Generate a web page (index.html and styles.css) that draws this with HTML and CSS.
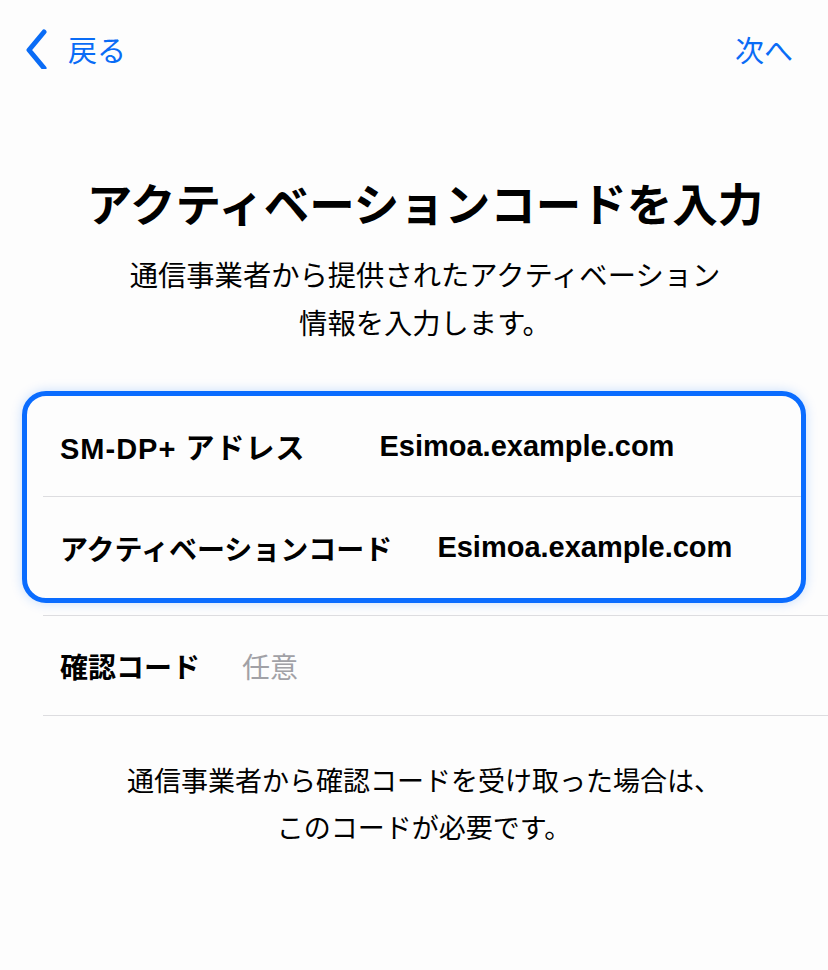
FILE: index.html
```html
<!DOCTYPE html>
<html lang="ja">
<head>
    <meta charset="utf-8" />
    <meta name="viewport" content="width=device-width,initial-scale=1" />
    <title>アクティベーションコードを入力</title>
    <link rel="stylesheet" href="styles.css">
</head>
<body>
    <div class="nav">
        <a class="back">
            <svg class="chev" width="24" height="40" viewBox="0 0 24 40">
                <path d="M19 3 L4 21 L19 39" fill="none" stroke="currentColor" stroke-width="5" stroke-linecap="round" stroke-linejoin="round"/>
            </svg>
            <span>戻る</span>
        </a>
        <a class="next">次へ</a>
    </div>

    <h1 class="title">アクティベーションコードを入力</h1>
    <p class="lead">通信事業者から提供されたアクティベーション<br>情報を入力します。</p>

    <div class="highlight">
        <div class="row row-first">
            <span class="label label-dp">SM-DP+ アドレス</span>
            <span class="value">Esimoa.example.com</span>
        </div>
        <div class="row">
            <span class="label label-code">アクティベーションコード</span>
            <span class="value">Esimoa.example.com</span>
        </div>
    </div>

    <div class="list">
        <div class="row row-plain">
            <span class="label label-check">確認コード</span>
            <span class="placeholder">任意</span>
        </div>
    </div>

    <p class="note">通信事業者から確認コードを受け取った場合は、<br>このコードが必要です。</p>
</body>
</html>
```

FILE: styles.css
```css
* {margin: 0; padding: 0; box-sizing: border-box;}

body {
    background: #fdfdfd;
    color: #000;
    font-family: "Noto Sans CJK JP", "Liberation Sans", sans-serif;
}

.nav {
    display: flex;
    justify-content: space-between;
    align-items: center;
    height: 40px;
    margin-top: 29px;
    padding: 0 35px 0 25px;
    color: #0a6cf6;
    font-size: 29px;
}
.back {
    display: flex;
    align-items: center;
    gap: 19px;
}
.chev {display: block;}

.title {
    margin-top: 106px;
    padding-left: 22px;
    text-align: center;
    font-size: 45.5px;
    line-height: 54px;
    font-weight: 700;
}

.lead {
    margin-top: 21px;
    padding-left: 22px;
    text-align: center;
    font-size: 28.3px;
    line-height: 48px;
}

.highlight {
    margin: 45px 22px 0 22px;
    border: 5px solid #0a6cff;
    border-radius: 24px;
    box-shadow: 0 0 12px rgba(10, 108, 255, 0.22);
    background: #fdfdfd;
}
.highlight .row {
    margin-left: 16px;
}
.row-first {
    border-bottom: 1px solid #dddde0;
}

.row {
    display: flex;
    align-items: center;
    height: 101px;
    padding-left: 17px;
    font-size: 28px;
}
.label {font-weight: 700;}
.label-dp {
    margin-right: 74px;
    font-family: "Liberation Sans", "Noto Sans CJK JP", sans-serif;
    font-size: 29px;
    letter-spacing: 1px;
}
.label-code {margin-right: 45px;}
.label-check {margin-right: 42px;}
.value {
    font-family: "Liberation Sans", sans-serif;
    font-weight: 700;
    font-size: 29px;
}
.placeholder {color: #a1a1a6;}

.list {
    margin: 12px 0 0 43px;
    border-top: 1px solid #dddde0;
}
.row-plain {
    height: 100px;
    border-bottom: 1px solid #dddde0;
}

.note {
    margin-top: 40px;
    padding-left: 20px;
    text-align: center;
    font-size: 27px;
    line-height: 47px;
}
```
